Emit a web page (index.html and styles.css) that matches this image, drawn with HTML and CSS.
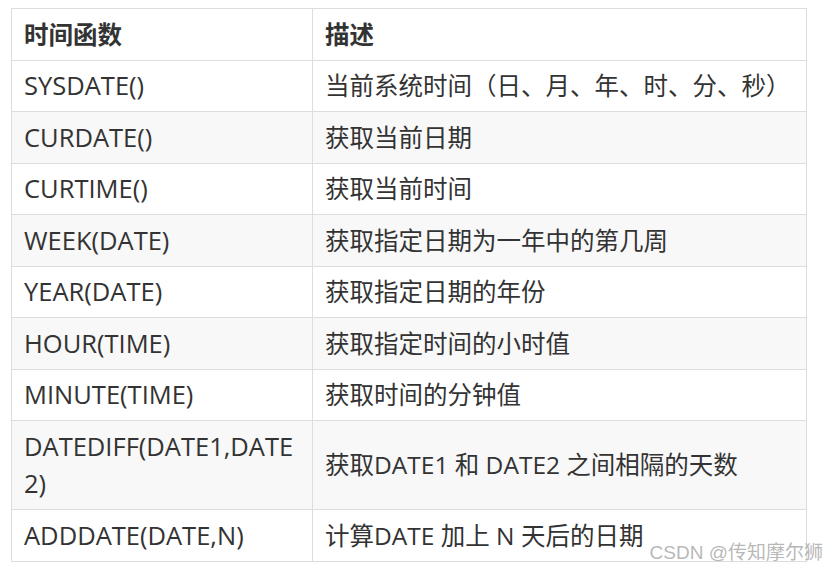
FILE: index.html
```html
<!DOCTYPE html>
<html lang="zh-CN">
<head>
<meta charset="utf-8">
<link rel="stylesheet" href="styles.css">
</head>
<body>
<div class="wrap">
<table class="tbl">
  <thead>
    <tr><th class="c1">时间函数</th><th>描述</th></tr>
  </thead>
  <tbody>
    <tr><td class="c1">SYSDATE()</td><td>当前系统时间（日、月、年、时、分、秒）</td></tr>
    <tr><td class="c1">CURDATE()</td><td>获取当前日期</td></tr>
    <tr><td class="c1">CURTIME()</td><td>获取当前时间</td></tr>
    <tr><td class="c1">WEEK(DATE)</td><td>获取指定日期为一年中的第几周</td></tr>
    <tr><td class="c1">YEAR(DATE)</td><td>获取指定日期的年份</td></tr>
    <tr><td class="c1">HOUR(TIME)</td><td>获取指定时间的小时值</td></tr>
    <tr><td class="c1">MINUTE(TIME)</td><td>获取时间的分钟值</td></tr>
    <tr><td class="c1">DATEDIFF(DATE1,DATE2)</td><td>获取DATE1 和 DATE2 之间相隔的天数</td></tr>
    <tr><td class="c1">ADDDATE(DATE,N)</td><td>计算DATE 加上 N 天后的日期</td></tr>
  </tbody>
</table>
<div class="watermark">CSDN @传知摩尔狮</div>
</div>
</body>
</html>
```
FILE: styles.css
```css
html, body {
  margin: 0;
  padding: 0;
  background: #ffffff;
}
.wrap {
  position: relative;
  padding: 8px 0 0 11px;
  width: 796px;
}
.tbl {
  border-collapse: collapse;
  width: 796px;
  table-layout: fixed;
  font-family: "Open Sans", "Noto Sans CJK SC", sans-serif;
  font-size: 24.5px;
  color: #333333;
}
.tbl th, .tbl td {
  border: 1px solid #dddddd;
  padding: 6.5px 12px;
  line-height: 37.5px;
  text-align: left;
  vertical-align: middle;
  word-break: break-all;
}
.tbl th {
  font-weight: 700;
  background: #ffffff;
}
.tbl .c1 {
  width: 276px;
}
.tbl td.c1 {
  font-size: 25.5px;
}
.tbl tbody tr:nth-child(even) td {
  background: #f8f8f8;
}
.watermark {
  position: absolute;
  right: -16px;
  bottom: -2px;
  font-family: "Liberation Sans", "Noto Sans CJK SC", sans-serif;
  font-size: 19px;
  color: rgba(160, 160, 160, 0.75);
  white-space: nowrap;
}
```
